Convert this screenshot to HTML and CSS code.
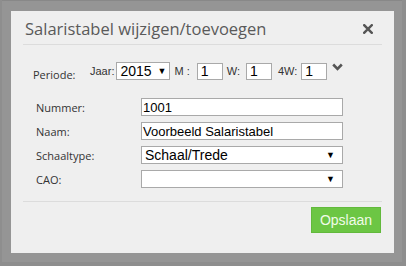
FILE: index.html
```html
<!DOCTYPE html>
<html>
<head>
<meta charset="utf-8">
<link rel="stylesheet" href="styles.css">
</head>
<body>
<div class="backdrop">
  <div class="dialog">
    <div class="header">
      <h1 class="title">Salaristabel wijzigen/toevoegen</h1>
      <svg class="close" width="10" height="10" viewBox="0 0 10 10"><path d="M1.2 1.2 L8.8 8.8 M8.8 1.2 L1.2 8.8" stroke="#555" stroke-width="2.4" stroke-linecap="square"/></svg>
    </div>
    <div class="body">
      <div class="period">
        <span class="plabel">Periode:</span>
        <span class="small jaar">Jaar:</span>
        <span class="sel year">2015<span class="arrow">&#9660;</span></span>
        <span class="small m">M :</span>
        <span class="num">1</span>
        <span class="small w">W:</span>
        <span class="num">1</span>
        <span class="small w4">4W:</span>
        <span class="num">1</span>
        <svg class="chev" width="11" height="8" viewBox="0 0 11 8"><path d="M1.2 1.5 L5.5 5.8 L9.8 1.5" fill="none" stroke="#555" stroke-width="2.6"/></svg>
      </div>
      <div class="grid">
        <span class="label">Nummer:</span><span class="field">1001</span>
        <span class="label">Naam:</span><span class="field">Voorbeeld Salaristabel</span>
        <span class="label">Schaaltype:</span><span class="field select">Schaal/Trede<span class="arrow">&#9660;</span></span>
        <span class="label">CAO:</span><span class="field select"><span></span><span class="arrow">&#9660;</span></span>
      </div>
    </div>
    <div class="footer">
      <button class="save">Opslaan</button>
    </div>
  </div>
</div>
</body>
</html>
```
FILE: styles.css
```css
html, body { margin: 0; padding: 0; }
body { background: #8e8e8e; width: 406px; height: 266px; overflow: hidden; }
.backdrop {
  background: #959595;
  width: 400px;
  height: 262px;
  margin-left: 2px;
  border-top: 1px solid #888;
  box-sizing: border-box;
  padding: 10px 0 0 9px;
}
.dialog {
  width: 383px;
  height: 242px;
  background: #efefef;
  box-sizing: border-box;
  padding: 0 12px;
  display: flex;
  flex-direction: column;
}
.header {
  display: flex;
  justify-content: space-between;
  align-items: center;
  height: 33px;
  border-bottom: 1px solid #dcdcdc;
  padding: 0 9px 0 2px;
}
.title {
  margin: 0;
  font: 400 16.5px "Open Sans", sans-serif;
  color: #5a5a5a;
  padding-top: 2px;
}
.close { margin-top: 3px; }
.body { padding: 17px 0 0 10px; flex: 1; }
.period {
  display: flex;
  align-items: center;
  height: 18px;
}
.plabel { font: 11px "Open Sans", sans-serif; color: #333; width: 57px; padding-top: 6px; }
.small { font: 11px "Liberation Sans", sans-serif; color: #333; }
.sel, .num, .field {
  background: #fff;
  border: 1px solid #a9a9a9;
  box-sizing: border-box;
  font: 14px "Liberation Sans", Arial, sans-serif;
  color: #000;
  display: flex;
  align-items: center;
}
.jaar { margin-right: 2px; }
.year { width: 54px; height: 18px; padding: 0 3px 0 3px; justify-content: space-between; }
.arrow { font-size: 9px; color: #000; }
.num { width: 26px; height: 17px; padding-left: 3px; }
.m { margin-left: 4px; margin-right: 7px; }
.w { margin-left: 4px; margin-right: 6px; }
.w4 { margin-left: 6px; margin-right: 4px; }
.chev { margin-left: 5px; margin-top: -9px; }
.grid {
  display: grid;
  grid-template-columns: 108px 202px;
  row-gap: 6px;
  margin-top: 18px;
  align-items: center;
}
.label { font: 11px "Open Sans", sans-serif; color: #333; padding-left: 3px; }
.field { height: 18px; padding-left: 1px; font-size: 13px; }
.select { justify-content: space-between; padding: 0 7px 0 3px; font-size: 14px; }
.footer {
  border-top: 1px solid #dcdcdc;
  height: 52px;
  box-sizing: border-box;
  display: flex;
  justify-content: flex-end;
  align-items: flex-start;
  padding-top: 5px;
}
.save {
  width: 70px;
  height: 26px;
  background: #6cc644;
  border: 1px solid #62b93c;
  color: #f0fbe8;
  font: 14px "Liberation Sans", Arial, sans-serif;
  padding: 0;
  margin-right: 1px;
}
```
